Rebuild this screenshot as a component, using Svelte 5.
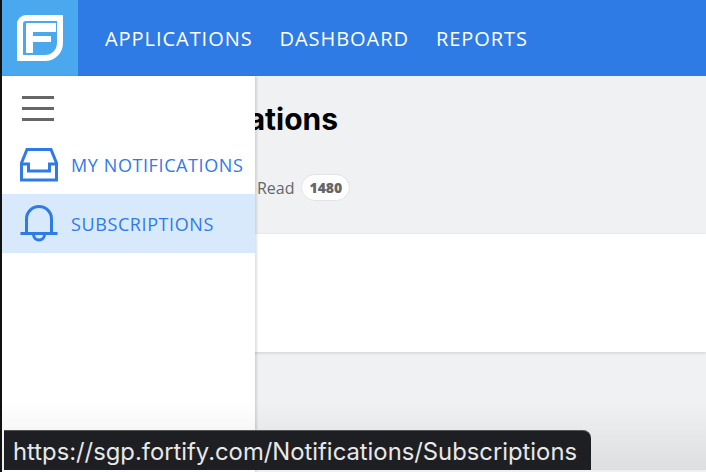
<script>
	const navLinks = ['APPLICATIONS', 'DASHBOARD', 'REPORTS'];
</script>

<div class="page">
	<header class="topbar">
		<div class="logo">
			<svg width="46" height="46" viewBox="0 0 46 46">
				<path d="M9 0H46V28A18 18 0 0 1 28 46H0V9A9 9 0 0 1 9 0Z" fill="#fff" />
				<path d="M9 6H40V28A12 12 0 0 1 28 40H6V9A3 3 0 0 1 9 6Z" fill="#4aa8ee" />
				<path d="M9 8H39V17H16V21H34V27H16V38H9Z" fill="#fff" />
			</svg>
		</div>
		<nav class="topnav">
			{#each navLinks as link}
				<span>{link}</span>
			{/each}
		</nav>
	</header>

	<main class="content">
		<h1>Notifications</h1>
		<div class="tabs">
			<span class="tab">Unread <b class="count">0</b></span>
			<span class="tab">Read <b class="count">1480</b></span>
		</div>
		<div class="card"></div>
	</main>

	<aside class="drawer">
		<button class="burger" aria-label="Menu">
			<i></i><i></i><i></i>
		</button>
		<a class="item">
			<svg width="38" height="34" viewBox="0 0 38 34" fill="none" stroke="#2f7be6" stroke-width="3">
				<path d="M1.500 15V32H36.500V15L31 1.500H7Z" />
				<path d="M1.500 16H8.500V23H29.500V16H36.500" />
			</svg>
			<span>MY NOTIFICATIONS</span>
		</a>
		<a class="item active">
			<svg width="38" height="38" viewBox="0 0 38 38" fill="none" stroke="#2f7be6" stroke-width="3">
				<path d="M6.500 28V14A12.500 12.500 0 0 1 31.500 14V28" />
				<path d="M0.500 28.500H37.500" />
				<path d="M13.500 29.500A5.500 5.500 0 0 0 24.500 29.500" />
			</svg>
			<span>SUBSCRIPTIONS</span>
		</a>
	</aside>

	<div class="fade"></div>
	<div class="status">https://sgp.fortify.com/Notifications/Subscriptions</div>
</div>

<style>
	:global(body) {
		margin: 0;
		background: #f0f1f3;
		overflow: hidden;
	}

	.page {
		position: relative;
		width: 706px;
		height: 472px;
		box-sizing: border-box;
		background: #f0f1f3;
		font-family: "Open Sans", sans-serif;
		overflow: hidden;
		border-left: 2px solid #111;
	}

	.topbar {
		display: flex;
		align-items: center;
		height: 76px;
		background: #2f7be6;
	}

	.logo {
		display: flex;
		align-items: center;
		justify-content: center;
		width: 76px;
		height: 76px;
		background: #4aa8ee;
	}

	.topnav {
		display: flex;
		gap: 27px;
		margin-left: 27px;
		color: #fff;
		font-size: 20px;
		letter-spacing: 0.95px;
	}

	.content {
		padding: 23px 0 0 147px;
	}

	h1 {
		margin: 0;
		font-size: 30px;
		line-height: 40px;
		font-weight: 700;
		color: #000;
		font-family: Inter, sans-serif;
	}

	.tabs {
		display: flex;
		gap: 21px;
		margin-top: 35px;
		font-size: 16px;
		color: #666;
	}

	.tab {
		display: flex;
		align-items: center;
		gap: 7px;
	}

	.count {
		display: inline-block;
		box-sizing: border-box;
		height: 27px;
		padding: 0 7px;
		line-height: 25px;
		text-align: center;
		border: 1px solid #e2e2e2;
		border-radius: 14px;
		background: #fff;
		font-size: 14px;
		font-weight: 800;
		color: #666;
	}

	.card {
		height: 118px;
		margin-top: 33px;
		background: #fff;
		box-shadow: 0 1px 3px rgba(0, 0, 0, 0.15);
	}

	.drawer {
		position: absolute;
		top: 76px;
		left: 0;
		bottom: 0;
		width: 253px;
		background: #fff;
		box-shadow: 2px 0 2px rgba(0, 0, 0, 0.12);
	}

	.burger {
		display: flex;
		flex-direction: column;
		gap: 8px;
		margin: 20px 0 14px 20px;
		padding: 0;
		border: none;
		background: none;
	}

	.burger i {
		display: block;
		width: 32px;
		height: 3px;
		background: #666;
	}

	.item {
		display: flex;
		align-items: center;
		gap: 13px;
		height: 59px;
		padding-left: 18px;
		color: #2f7be6;
		font-size: 18px;
		letter-spacing: 0.6px;
	}

	.item.active {
		background: #d8e9fb;
	}

	.fade {
		position: absolute;
		left: 0;
		right: 0;
		bottom: 2px;
		height: 70px;
		background: linear-gradient(rgba(0, 0, 0, 0), rgba(0, 0, 0, 0.08));
	}

	.status {
		position: absolute;
		left: 2px;
		bottom: 2px;
		height: 40px;
		width: 587px;
		box-sizing: border-box;
		padding-left: 9px;
		line-height: 41px;
		background: #1e1f22;
		border-top: 1px solid #555;
		border-top-right-radius: 8px;
		color: #e8e8e8;
		font-family: Inter, sans-serif;
		font-size: 23.8px;
		white-space: nowrap;
	}
</style>
